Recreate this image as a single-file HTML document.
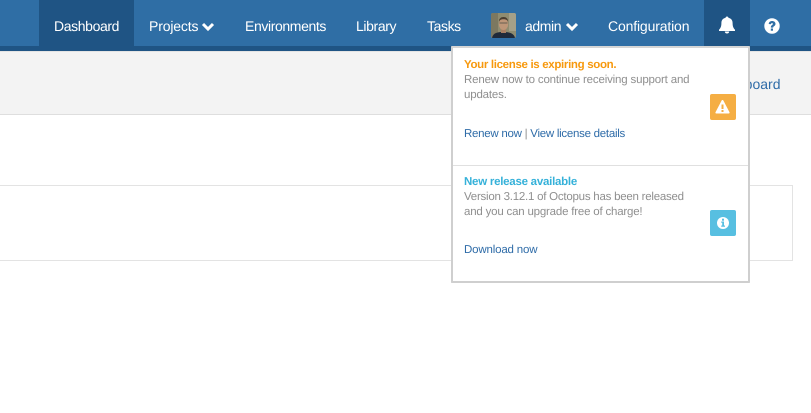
<!DOCTYPE html>
<html>
<head>
<meta charset="utf-8">
<style>
html,body{margin:0;padding:0;width:811px;height:413px;overflow:hidden;background:#fff;font-family:"Liberation Sans",sans-serif;text-rendering:geometricPrecision}
.a{position:absolute;white-space:nowrap}
.n{color:#fff;font-size:14px;line-height:18px;top:17px;letter-spacing:-.38px}
.p{font-size:11.5px;line-height:15px;color:#8f8f8f;letter-spacing:-.17px}
.l{color:#2f6ca8}
.b{font-weight:bold}
</style>
</head>
<body>
<div class="a" style="left:0;top:0;width:811px;height:46px;background:#2f6ea5"></div>
<div class="a" style="left:0;top:46px;width:811px;height:5px;background:#1f5484"></div>
<div class="a" style="left:0;top:51px;width:811px;height:62px;background:#f3f3f3;border-top:1px solid #e4e4e4;border-bottom:1px solid #dedede"></div>
<div class="a" style="left:39px;top:0;width:95px;height:46px;background:#1f5484"></div>
<div class="a" style="left:704px;top:0;width:46px;height:46px;background:#1f5484"></div>

<div class="a n" style="left:54px;">Dashboard</div>
<div class="a n" style="left:149px;letter-spacing:-.15px">Projects</div>
<svg class="a" style="left:201px;top:22px" width="14" height="10" viewBox="0 0 14 10"><path d="M2 2l5 5 5-5" fill="none" stroke="#fff" stroke-width="3"/></svg>
<div class="a n" style="left:245px;">Environments</div>
<div class="a n" style="left:356px;">Library</div>
<div class="a n" style="left:427px;letter-spacing:-.4px">Tasks</div>

<svg class="a" style="left:491px;top:13px" width="25" height="25" viewBox="0 0 25 25">
<defs><clipPath id="c"><rect width="25" height="25" rx="2"/></clipPath></defs>
<g clip-path="url(#c)">
<rect width="25" height="25" fill="#8f8c70"/>
<rect x="0" y="0" width="7" height="25" fill="#7c7860"/>
<rect x="18" y="0" width="7" height="18" fill="#a5a088"/>
<path d="M1 25c1-5 5-6 11-6s11 1 12 6z" fill="#1f2a3a"/>
<rect x="10" y="15" width="5" height="5" fill="#a97f62"/>
<ellipse cx="12.500" cy="11" rx="4.700" ry="6" fill="#bd9678"/>
<path d="M8 9c-.3-3.500 2-5 4.500-5s4.800 1.500 4.500 5c-.5-2-2-2.700-4.500-2.700S8.500 7 8 9z" fill="#4a3d2e"/>
<path d="M8.500 10h8" stroke="#4c4a44" stroke-width=".8"/>
</g>
</svg>
<div class="a n" style="left:525px;letter-spacing:-.4px">admin</div>
<svg class="a" style="left:565px;top:22px" width="14" height="10" viewBox="0 0 14 10"><path d="M2 2l5 5 5-5" fill="none" stroke="#fff" stroke-width="3"/></svg>
<div class="a n" style="left:608px;letter-spacing:-.15px">Configuration</div>

<svg class="a" style="left:718px;top:16px" width="18" height="18" viewBox="0 0 18 18"><path d="M9 .5c.8 0 1.400.5 1.400 1.300C13.300 2.500 14.600 4.500 14.600 7c0 3.500.8 5 2.400 6.800V15H1v-1.200C2.600 12 3.400 10.500 3.400 7c0-2.500 1.300-4.500 4.200-5.200C7.600 1 8.200.5 9 .5zM6.800 15.500h4.400c0 1.200-1 2-2.200 2s-2.200-.8-2.200-2z" fill="#fff"/></svg>
<svg class="a" style="left:764px;top:18px" width="16" height="16" viewBox="0 0 16 16"><circle cx="8" cy="8" r="7.700" fill="#fff"/><path d="M4.700 6C4.900 4 6.300 3 8.100 3c2 0 3.400 1.200 3.400 2.900 0 1.300-.8 1.900-1.500 2.400-.5.400-.8.600-.8 1.300H6.800c0-1.400.4-2 1.200-2.600.6-.4.900-.6.900-1.100s-.4-.8-.9-.8c-.6 0-1 .4-1.200 1.100z" fill="#2f6ea5"/><rect x="6.800" y="10.500" width="2.200" height="2.200" fill="#2f6ea5"/></svg>

<div class="a" style="left:-2px;top:185px;width:793px;height:74px;border:1px solid #e3e3e3;background:#fff"></div>
<div class="a" style="left:712px;top:76px;font-size:14px;line-height:16px;color:#2f6ca8;">Dashboard</div>

<div class="a" style="left:451px;top:46px;width:295px;height:233px;background:#fff;border:2px solid #cfcfcf;border-top:2px solid #d5d5d5;border-radius:1px"></div>
<div class="a" style="left:453px;top:165px;width:295px;height:1px;background:#e0e0e0"></div>

<div class="a p b" style="left:464px;top:58px;color:#f7990e;letter-spacing:-.33px">Your license is expiring soon.</div>
<div class="a p" style="left:464px;top:73px">Renew now to continue receiving support and</div>
<div class="a p" style="left:464px;top:88px">updates.</div>
<div class="a p" style="left:464px;top:127px;letter-spacing:-.27px"><span class="l">Renew now</span> | <span class="l">View license details</span></div>
<div class="a" style="left:710px;top:94px;width:26px;height:26px;border-radius:2px;background:#f5ae43"></div>
<svg class="a" style="left:715px;top:100px" width="15" height="14" viewBox="0 0 15 14"><path d="M7.500 0c.5 0 .8.300 1 .7l6 11.500c.3.600-.1 1.300-.8 1.300H1.300c-.7 0-1.100-.7-.8-1.300l6-11.500c.2-.4.500-.7 1-.7z" fill="#fff"/><rect x="6.500" y="4.500" width="2" height="4.500" fill="#f5ae43"/><rect x="6.500" y="10" width="2" height="2" fill="#f5ae43"/></svg>

<div class="a p b" style="left:464px;top:175px;color:#35b1d9;letter-spacing:-.25px">New release available</div>
<div class="a p" style="left:464px;top:190px;letter-spacing:-.24px">Version 3.12.1 of Octopus has been released</div>
<div class="a p" style="left:464px;top:205px;letter-spacing:-.2px">and you can upgrade free of charge!</div>
<div class="a p l" style="left:464px;top:243px;color:#2f6ca8">Download now</div>
<div class="a" style="left:710px;top:210px;width:26px;height:26px;border-radius:2px;background:#57bfe1"></div>
<svg class="a" style="left:716px;top:216px" width="14" height="14" viewBox="0 0 14 14"><circle cx="7" cy="7" r="6" fill="#fff"/><rect x="6" y="2.700" width="2" height="2" fill="#57bfe1"/><path d="M5.200 5.500H8v4h1v1.300H5.200V9.500h1V6.800h-1z" fill="#57bfe1"/></svg>
</body>
</html>
